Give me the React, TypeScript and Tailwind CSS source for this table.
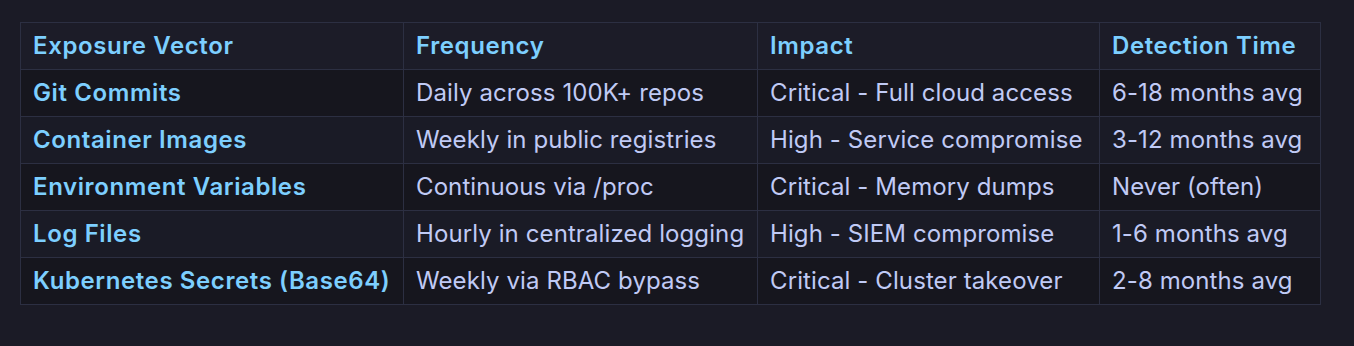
import React from 'react';

interface IExposureRow {
  vector: string;
  frequency: string;
  impact: string;
  detection: string;
}

const rows: IExposureRow[] = [
  { vector: 'Git Commits', frequency: 'Daily across 100K+ repos', impact: 'Critical - Full cloud access', detection: '6-18 months avg' },
  { vector: 'Container Images', frequency: 'Weekly in public registries', impact: 'High - Service compromise', detection: '3-12 months avg' },
  { vector: 'Environment Variables', frequency: 'Continuous via /proc', impact: 'Critical - Memory dumps', detection: 'Never (often)' },
  { vector: 'Log Files', frequency: 'Hourly in centralized logging', impact: 'High - SIEM compromise', detection: '1-6 months avg' },
  { vector: 'Kubernetes Secrets (Base64)', frequency: 'Weekly via RBAC bypass', impact: 'Critical - Cluster takeover', detection: '2-8 months avg' },
];

const App: React.FC = () => {
  return (
    <div
      className="min-h-[346px] bg-[#1b1b26] pt-[22px] pl-[20px]"
      style={{ fontFamily: 'Inter, "Noto Sans", sans-serif' }}
    >
      {/* Tabla de vectores de exposición */}
      <table className="w-[1300px] table-fixed border-collapse text-[24px] leading-[32px] tracking-[0.1px]">
        <colgroup>
          <col className="w-[383px]" />
          <col className="w-[354px]" />
          <col className="w-[342px]" />
          <col className="w-[221px]" />
        </colgroup>
        <thead>
          <tr className="bg-[#1c1c28]">
            <th className="border border-[#2c2f42] px-[12px] py-[7px] text-left font-semibold tracking-[0.6px] text-[#7dcfff]">Exposure Vector</th>
            <th className="border border-[#2c2f42] px-[12px] py-[7px] text-left font-semibold tracking-[0.6px] text-[#7dcfff]">Frequency</th>
            <th className="border border-[#2c2f42] px-[12px] py-[7px] text-left font-semibold tracking-[0.6px] text-[#7dcfff]">Impact</th>
            <th className="border border-[#2c2f42] px-[12px] py-[7px] text-left font-semibold tracking-[0.6px] text-[#7dcfff]">Detection Time</th>
          </tr>
        </thead>
        <tbody>
          {rows.map((row, i) => (
            <tr key={row.vector} className={i % 2 === 0 ? 'bg-[#16161e]' : 'bg-[#1a1b26]'}>
              <td className="border border-[#2c2f42] px-[12px] py-[7px] font-semibold tracking-[0.6px] whitespace-nowrap text-[#7dcfff]">{row.vector}</td>
              <td className="border border-[#2c2f42] px-[12px] py-[7px] whitespace-nowrap text-[#c0caf5]">{row.frequency}</td>
              <td className="border border-[#2c2f42] px-[12px] py-[7px] whitespace-nowrap text-[#c0caf5]">{row.impact}</td>
              <td className="border border-[#2c2f42] px-[12px] py-[7px] whitespace-nowrap text-[#c0caf5]">{row.detection}</td>
            </tr>
          ))}
        </tbody>
      </table>
    </div>
  );
};

export default App;
